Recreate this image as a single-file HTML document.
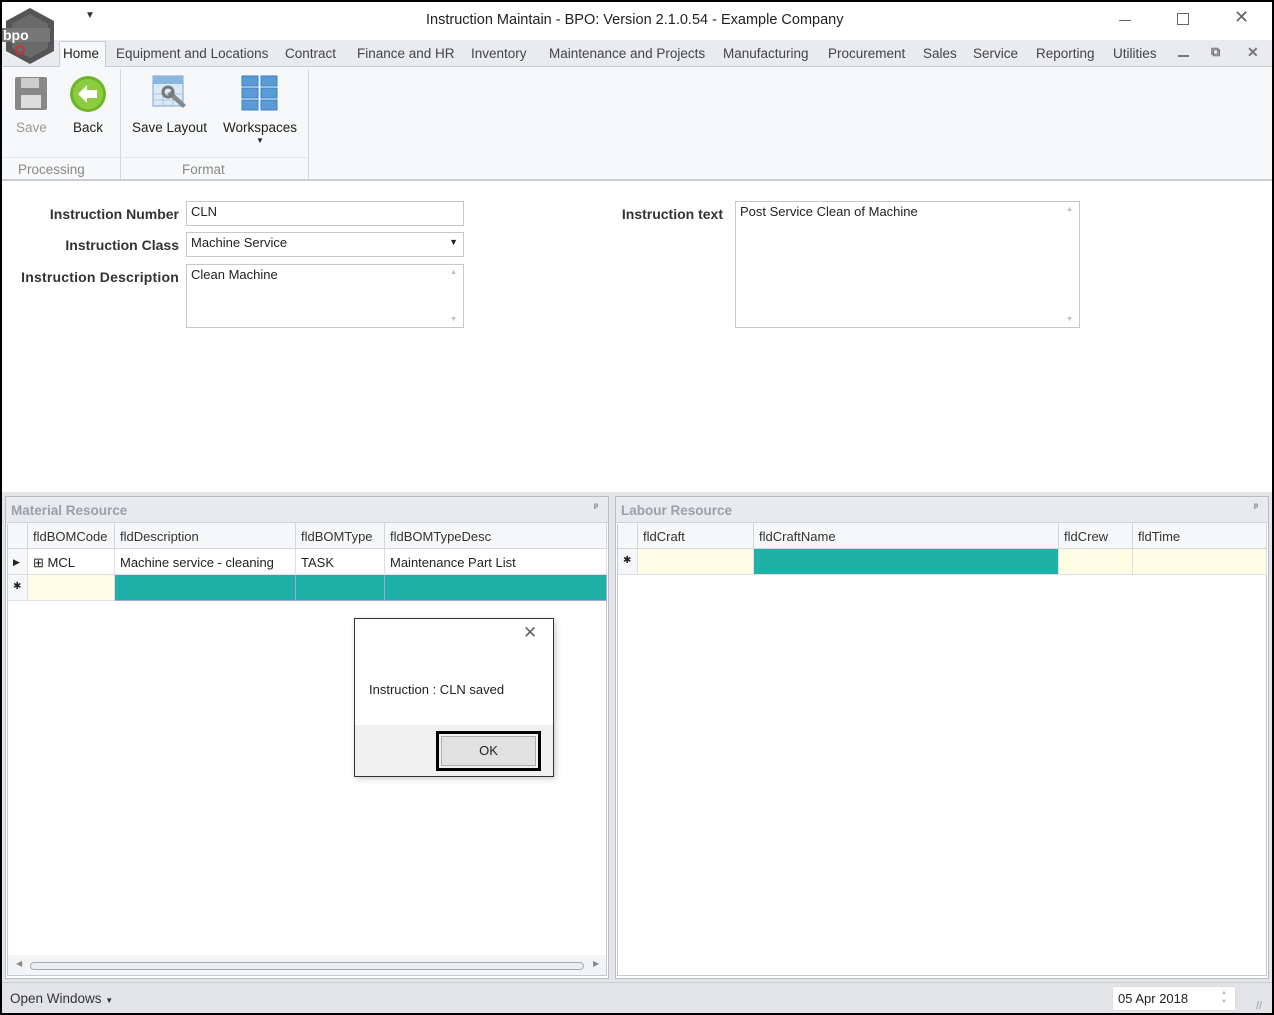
<!DOCTYPE html>
<html><head><meta charset="utf-8"><style>
*{box-sizing:border-box;margin:0;padding:0}
body{width:1274px;height:1015px;background:#000;font-family:"Liberation Sans",sans-serif;font-size:13px;color:#222;position:relative;overflow:hidden}
.a{position:absolute;white-space:nowrap}
#win{position:absolute;left:2px;top:2px;width:1270px;height:1011px;background:#fff;overflow:hidden}
.tab{position:absolute;top:44px;font-size:13.5px;color:#444}
.lbl{font-weight:bold;font-size:14px;color:#333;text-align:right}
.box{position:absolute;border:1px solid #c8c8c8;background:#fff;font-size:13px;padding:2px 4px;color:#222}
.panel{position:absolute;border:1px solid #b9bcc2;background:#fff}
.ph{position:absolute;left:0;right:0;top:0;height:26px;background:#e8eaed;border-bottom:1px solid #d0d3d8;font-weight:bold;color:#9aa0a8;font-size:13.5px;padding:6px 5px}
.hd{position:absolute;top:26px;height:26px;background:#f6f7f8;border-right:1px solid #d3d6da;border-bottom:1px solid #d3d6da;padding:6px 5px;font-size:13px;color:#333}
.cl{position:absolute;height:26px;border-right:1px solid #dcdfe3;border-bottom:1px solid #dcdfe3;padding:6px 5px;font-size:13px}
</style></head><body>
<div id="win">
<!-- title bar -->
<div class="a" style="left:0;top:0;width:1270px;height:38px;background:#fff"></div>
<div class="a" style="left:83px;top:8px;font-size:10px;color:#333">▼</div>
<div class="a" style="left:424px;top:10px;font-size:14.5px;color:#222">Instruction Maintain - BPO: Version 2.1.0.54 - Example Company</div>
<div class="a" style="left:1117px;top:18px;width:12px;height:1px;background:#666"></div>
<div class="a" style="left:1175px;top:11px;width:12px;height:12px;border:1px solid #666"></div>
<div class="a" style="left:1232px;top:5px;font-size:18px;color:#666">✕</div>
<!-- tabs -->
<div class="a" style="left:0;top:38px;width:1270px;height:27px;background:#e9ebee;border-bottom:1px solid #c9ccd1"></div>
<div class="a" style="left:57px;top:39px;width:47px;height:27px;background:#f7f8f9;border:1px solid #c9ccd1;border-bottom:none"></div>
<div class="tab" style="left:61px;color:#222">Home</div>
<div class="tab" style="left:114px">Equipment and Locations</div>
<div class="tab" style="left:283px">Contract</div>
<div class="tab" style="left:355px">Finance and HR</div>
<div class="tab" style="left:469px">Inventory</div>
<div class="tab" style="left:547px">Maintenance and Projects</div>
<div class="tab" style="left:721px">Manufacturing</div>
<div class="tab" style="left:826px">Procurement</div>
<div class="tab" style="left:921px">Sales</div>
<div class="tab" style="left:971px">Service</div>
<div class="tab" style="left:1034px">Reporting</div>
<div class="tab" style="left:1111px">Utilities</div>
<div class="a" style="left:1176px;top:53px;width:11px;height:2px;background:#777"></div>
<div class="a" style="left:1209px;top:42px;font-size:13px;color:#777;font-weight:bold">⧉</div>
<div class="a" style="left:1245px;top:42px;font-size:14px;color:#777;font-weight:bold">✕</div>
<svg class="a" style="left:0;top:4px" width="56" height="62" viewBox="0 0 56 62">
<polygon points="28,2 52,15 52,45 28,58 4,45 4,15" fill="#555"/>
<polygon points="28,8 46,18 46,42 28,52 10,42 10,18" fill="#6a6a6a"/>
<rect x="0" y="22" width="48" height="14" fill="#777"/>
<text x="1" y="34" font-family="Liberation Sans" font-size="14" fill="#fff" font-weight="bold">bpo</text>
<circle cx="18" cy="44" r="4" fill="none" stroke="#c33" stroke-width="2"/>
</svg>
<!-- ribbon -->
<div class="a" style="left:0;top:65px;width:1270px;height:114px;background:#f7f8f9;border-bottom:2px solid #c9ccd1"></div>
<div class="a" style="left:118px;top:67px;width:1px;height:110px;background:#d5d8dc"></div>
<div class="a" style="left:306px;top:67px;width:1px;height:110px;background:#d5d8dc"></div>
<div class="a" style="left:0;top:155px;width:306px;height:1px;background:#e3e5e8"></div>
<svg class="a" style="left:12px;top:74px" width="34" height="36"><rect x="1" y="1" width="32" height="33" rx="2" fill="#888"/><rect x="7" y="2" width="18" height="10" fill="#ccc"/><rect x="7" y="19" width="20" height="13" fill="#ddd"/></svg>
<svg class="a" style="left:67px;top:73px" width="38" height="38"><circle cx="19" cy="19" r="18" fill="#6fb52c"/><circle cx="19" cy="19" r="15" fill="#8ccc3e"/><path d="M9 19 L18 10 L18 15 L28 15 L28 23 L18 23 L18 28 Z" fill="#fff"/></svg>
<svg class="a" style="left:149px;top:72px" width="38" height="38"><rect x="2" y="2" width="30" height="30" fill="#dbe8f5" stroke="#7aa5d0"/><rect x="2" y="2" width="30" height="8" fill="#8ab6e0"/><path d="M12 14v18M22 14v18M2 20h30M2 26h30" stroke="#a9c5e2"/><path d="M16 20 L32 34 L35 31 L20 17 Z" fill="#888"/><circle cx="17" cy="18" r="5" fill="none" stroke="#777" stroke-width="3"/></svg>
<svg class="a" style="left:239px;top:73px" width="38" height="38"><g fill="#5b9bd5" stroke="#3d7fc0"><rect x="1" y="1" width="16" height="10"/><rect x="20" y="1" width="16" height="10"/><rect x="1" y="13" width="16" height="10"/><rect x="20" y="13" width="16" height="10"/><rect x="1" y="25" width="16" height="10"/><rect x="20" y="25" width="16" height="10"/></g></svg>
<div class="a" style="left:14px;top:118px;color:#999;font-size:13.5px">Save</div>
<div class="a" style="left:71px;top:118px;color:#222;font-size:13.5px">Back</div>
<div class="a" style="left:130px;top:118px;color:#222;font-size:13.5px">Save Layout</div>
<div class="a" style="left:221px;top:118px;color:#222;font-size:13.5px">Workspaces</div>
<div class="a" style="left:254px;top:134px;font-size:8px">▼</div>
<div class="a" style="left:16px;top:160px;color:#888;font-size:13.5px">Processing</div>
<div class="a" style="left:180px;top:160px;color:#888;font-size:13.5px">Format</div>
<!-- form -->
<div class="a lbl" style="left:0;width:177px;top:204px">Instruction Number</div>
<div class="a lbl" style="left:0;width:177px;top:235px">Instruction Class</div>
<div class="a lbl" style="left:0;width:177px;top:267px;letter-spacing:0.2px">Instruction Description</div>
<div class="box" style="left:184px;top:199px;width:278px;height:25px">CLN</div>
<div class="box" style="left:184px;top:230px;width:278px;height:25px">Machine Service<span style="position:absolute;right:5px;top:4px;font-size:9px">▼</span></div>
<div class="box" style="left:184px;top:262px;width:278px;height:64px">Clean Machine<span style="position:absolute;right:6px;top:4px;font-size:7px;color:#bbb">▲</span><span style="position:absolute;right:6px;bottom:4px;font-size:7px;color:#bbb">▼</span></div>
<div class="a lbl" style="left:560px;width:161px;top:204px">Instruction text</div>
<div class="box" style="left:733px;top:199px;width:345px;height:127px">Post Service Clean of Machine<span style="position:absolute;right:6px;top:4px;font-size:7px;color:#bbb">▲</span><span style="position:absolute;right:6px;bottom:4px;font-size:7px;color:#bbb">▼</span></div>
<!-- bottom area bg -->
<div class="a" style="left:0;top:490px;width:1270px;height:490px;background:#e3e5e8"></div>
<!-- material panel -->
<div class="panel" style="left:3px;top:494px;width:604px;height:483px">
<div class="ph">Material Resource<span style="position:absolute;right:10px;top:5px;font-size:10px;color:#777">ᵖ</span></div>
<div class="a" style="left:1px;top:27px;width:600px;height:452px;border:1px solid #c6c9ce;background:#fff"></div>
<div class="hd" style="left:2px;width:20px"></div>
<div class="hd" style="left:22px;width:87px">fldBOMCode</div>
<div class="hd" style="left:109px;width:181px">fldDescription</div>
<div class="hd" style="left:290px;width:89px">fldBOMType</div>
<div class="hd" style="left:379px;width:222px">fldBOMTypeDesc</div>
<div class="cl" style="top:52px;left:2px;width:20px;background:#f6f7f8;font-size:9px;padding-top:8px">▶</div>
<div class="cl" style="top:52px;left:22px;width:87px">⊞ MCL</div>
<div class="cl" style="top:52px;left:109px;width:181px">Machine service - cleaning</div>
<div class="cl" style="top:52px;left:290px;width:89px">TASK</div>
<div class="cl" style="top:52px;left:379px;width:222px">Maintenance Part List</div>
<div class="cl" style="top:78px;left:2px;width:20px;background:#f6f7f8;font-size:10px">✱</div>
<div class="cl" style="top:78px;left:22px;width:87px;background:#fffde3"></div>
<div class="cl" style="top:78px;left:109px;width:181px;background:#20b0a8;border-color:#9ad"></div>
<div class="cl" style="top:78px;left:290px;width:89px;background:#20b0a8;border-color:#9ad"></div>
<div class="cl" style="top:78px;left:379px;width:222px;background:#20b0a8;border-color:#9ad"></div>
<div class="a" style="left:2px;top:458px;width:598px;height:20px;background:#f3f4f5"></div>
<div class="a" style="left:24px;top:465px;width:554px;height:8px;border:1px solid #aaa;border-radius:4px;background:#eceef0"></div>
<div class="a" style="left:10px;top:462px;font-size:8px;color:#888">◀</div>
<div class="a" style="left:587px;top:462px;font-size:8px;color:#888">▶</div>
</div>
<!-- labour panel -->
<div class="panel" style="left:613px;top:494px;width:654px;height:483px">
<div class="ph">Labour Resource<span style="position:absolute;right:10px;top:5px;font-size:10px;color:#777">ᵖ</span></div>
<div class="a" style="left:1px;top:27px;width:650px;height:452px;border:1px solid #c6c9ce;background:#fff"></div>
<div class="hd" style="left:2px;width:20px"></div>
<div class="hd" style="left:22px;width:116px">fldCraft</div>
<div class="hd" style="left:138px;width:305px">fldCraftName</div>
<div class="hd" style="left:443px;width:74px">fldCrew</div>
<div class="hd" style="left:517px;width:134px">fldTime</div>
<div class="cl" style="top:52px;left:2px;width:20px;background:#f6f7f8;font-size:10px">✱</div>
<div class="cl" style="top:52px;left:22px;width:116px;background:#fffde3"></div>
<div class="cl" style="top:52px;left:138px;width:305px;background:#20b0a8"></div>
<div class="cl" style="top:52px;left:443px;width:74px;background:#fffde3"></div>
<div class="cl" style="top:52px;left:517px;width:134px;background:#fffde3"></div>
</div>
<!-- dialog -->
<div class="a" style="left:352px;top:616px;width:200px;height:159px;background:#fff;border:1px solid #333;box-shadow:2px 2px 6px rgba(0,0,0,.2)">
<div class="a" style="left:168px;top:4px;font-size:17px;color:#666">✕</div>
<div class="a" style="left:14px;top:63px;font-size:13px;color:#222">Instruction : CLN saved</div>
<div class="a" style="left:0;top:106px;width:198px;height:51px;background:#f0f0f0"></div>
<div class="a" style="left:81px;top:112px;width:105px;height:40px;border:3px solid #000"></div>
<div class="a" style="left:86px;top:117px;width:95px;height:30px;border:1px solid #adadad;background:#e1e1e1;text-align:center;line-height:28px;font-size:13px">OK</div>
</div>
<!-- status bar -->
<div class="a" style="left:0;top:980px;width:1270px;height:31px;background:#e2e4e7;border-top:1px solid #c9ccd1"></div>
<div class="a" style="left:8px;top:989px;font-size:13.5px;color:#333">Open Windows <span style="font-size:8px">▼</span></div>
<div class="a" style="left:1110px;top:984px;width:124px;height:25px;background:#fff;border:1px solid #ddd;padding:4px 5px;font-size:13px">05 Apr 2018<span style="position:absolute;right:8px;top:2px;font-size:6px;color:#bbb;line-height:9px">▲<br>▼</span></div>
<div class="a" style="left:1254px;top:998px;font-size:11px;color:#999">//</div>
</div>
</body></html>
